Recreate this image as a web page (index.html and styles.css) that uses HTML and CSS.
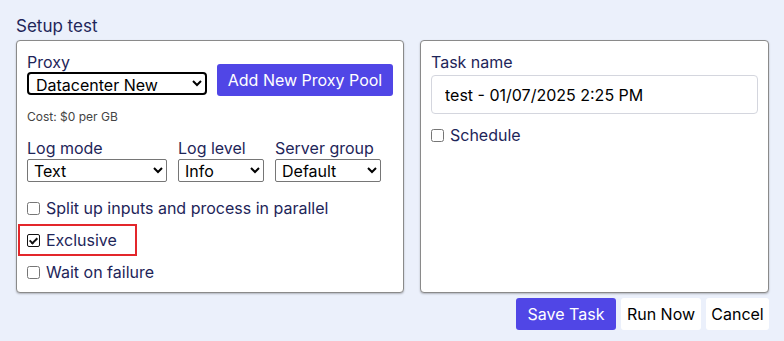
FILE: index.html
```html
<!DOCTYPE html>
<html lang="en">
    <head>
        <meta charset="UTF-8" />
        <meta name="viewport" content="width=device-width,initial-scale=1" />
        <title>Setup test</title>
        <link rel="stylesheet" href="styles.css">
    </head>
    <body>
        <main class="setup">
            <h2 class="title">Setup test</h2>
            <div class="panels">
                <section class="panel">
                    <div class="proxy-row">
                        <label class="field">
                            Proxy
                            <select class="sel sel-proxy">
                                <option>Datacenter New</option>
                            </select>
                        </label>
                        <button class="btn btn-primary btn-pool" type="button">Add New Proxy Pool</button>
                    </div>
                    <div class="cost">Cost: $0 per GB</div>

                    <div class="log-row">
                        <label class="field">
                            Log mode
                            <select class="sel sel-mode"><option>Text</option></select>
                        </label>
                        <label class="field">
                            Log level
                            <select class="sel sel-level"><option>Info</option></select>
                        </label>
                        <label class="field">
                            Server group
                            <select class="sel sel-group"><option>Default</option></select>
                        </label>
                    </div>

                    <div class="checks">
                        <label class="check"><input type="checkbox" /> Split up inputs and process in parallel</label>
                        <label class="check check-marked"><input class="box-checked" type="checkbox" checked /> Exclusive</label>
                        <label class="check"><input type="checkbox" /> Wait on failure</label>
                    </div>
                </section>

                <section class="panel panel-right">
                    <label class="field">
                        Task name
                        <input class="text-input" type="text" value="test - 01/07/2025 2:25 PM" />
                    </label>
                    <label class="check check-schedule"><input type="checkbox" /> Schedule</label>
                </section>
            </div>
            <div class="actions">
                <button class="btn btn-primary btn-save" type="button">Save Task</button>
                <button class="btn btn-light btn-run" type="button">Run Now</button>
                <button class="btn btn-light btn-cancel" type="button">Cancel</button>
            </div>
        </main>
    </body>
</html>
```

FILE: styles.css
```css
:root {
    --bg: #ebf0fb;
    --text: #1e2559;
    --primary: #5046e6;
    --panel-border: #8a8a8a;
}
html,
body {
    margin: 0;
    background: var(--bg);
    font-family: Inter, "Liberation Sans", Arial, sans-serif;
    color: var(--text);
    -webkit-font-smoothing: antialiased;
}
.setup {
    padding: 15px 15px 0 16px;
}
.title {
    margin: 0 0 2px 0;
    font-size: 17px;
    font-weight: 400;
    line-height: 23px;
}
.panels {
    display: grid;
    grid-template-columns: 388px 349px;
    gap: 16px;
}
.panel {
    background: #fff;
    border: 1px solid var(--panel-border);
    border-radius: 4px;
    box-shadow: 0 1px 2px rgba(0, 0, 0, 0.25);
    height: 253px;
    box-sizing: border-box;
    padding: 11px 10px;
}
.field {
    display: flex;
    flex-direction: column;
    font-size: 16px;
    line-height: 20px;
}
.sel {
    font-family: Inter, "Liberation Sans", Arial, sans-serif;
    font-size: 16px;
    color: #000;
    height: 23px;
    padding: 0 2px;
    border: 1px solid #767676;
    border-radius: 2px;
    background: #fff;
}
.proxy-row {
    display: flex;
    align-items: flex-end;
    gap: 10px;
}
.sel-proxy {
    width: 180px;
    border: 2px solid #000;
    border-radius: 4px;
    padding-left: 3px;
}
.btn {
    font-family: Inter, "Liberation Sans", Arial, sans-serif;
    font-size: 16px;
    border: none;
    border-radius: 3px;
    height: 32px;
    padding: 0;
    cursor: pointer;
}
.btn-primary {
    background: var(--primary);
    color: #fff;
}
.btn-pool {
    width: 176px;
    margin-bottom: -1px;
}
.cost {
    margin-top: 14px;
    font-size: 12px;
    color: #444;
    line-height: 15px;
}
.log-row {
    display: flex;
    gap: 11px;
    margin-top: 13px;
}
.log-row .field {
    line-height: 22px;
}
.sel-mode {
    width: 140px;
}
.sel-level {
    width: 86px;
}
.sel-group {
    width: 106px;
}
.checks {
    display: flex;
    flex-direction: column;
    align-items: flex-start;
    margin-top: 10px;
}
.check {
    display: flex;
    align-items: center;
    gap: 4px;
    height: 32px;
    font-size: 16px;
}
.check input {
    width: 13px;
    height: 13px;
    margin: 0 2px 0 0;
}
.check-marked {
    margin-left: -9px;
    padding: 0 18px 0 7px;
    border: 2px solid #e3262b;
    box-sizing: border-box;
    height: 32px;
}
/* checked box drawn by hand: white fill, dark border and tick */
.box-checked {
    appearance: none;
    -webkit-appearance: none;
    box-sizing: border-box;
    border: 1px solid #111;
    border-radius: 2px;
    background: #fff;
    position: relative;
}
.box-checked::after {
    content: "";
    position: absolute;
    left: 3px;
    top: 1px;
    width: 3px;
    height: 6px;
    border: solid #111;
    border-width: 0 2px 2px 0;
    transform: rotate(45deg);
}
.text-input {
    margin-top: 3px;
    height: 39px;
    box-sizing: border-box;
    border: 1px solid #d4d6de;
    border-radius: 4px;
    padding: 0 13px;
    font-family: Inter, "Liberation Sans", Arial, sans-serif;
    font-size: 16px;
    color: #000;
}
.check-schedule {
    margin-top: 5px;
}
.actions {
    display: flex;
    justify-content: flex-end;
    gap: 5px;
    margin-top: 5px;
}
.btn-save {
    width: 100px;
}
.btn-light {
    background: #fff;
    color: #000;
}
.btn-run {
    width: 80px;
}
.btn-cancel {
    width: 63px;
}
```
